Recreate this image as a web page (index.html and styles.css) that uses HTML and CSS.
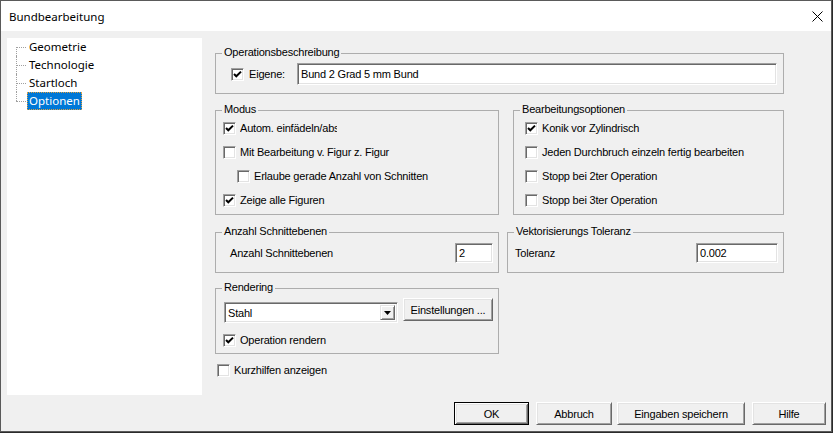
FILE: index.html
```html
<!DOCTYPE html>
<html lang="de">
<head>
<meta charset="utf-8">
<title>Bundbearbeitung</title>
<link rel="stylesheet" href="styles.css">
</head>
<body>
<div class="window">
  <div class="titlebar">
    <span class="title">Bundbearbeitung</span>
    <span class="close">
      <svg width="11" height="11" viewBox="0 0 11 11"><path d="M0.5 0.5 L10.5 10.5 M10.5 0.5 L0.5 10.5" stroke="#000" stroke-width="1" fill="none"/></svg>
    </span>
  </div>
  <div class="client">
    <div class="main">
      <div class="tree">
        <div class="node first"><span class="label">Geometrie</span></div>
        <div class="node"><span class="label">Technologie</span></div>
        <div class="node"><span class="label">Startloch</span></div>
        <div class="node last"><span class="label selected">Optionen</span></div>
      </div>
      <div class="panel">
        <div class="group g-desc">
          <span class="legend">Operationsbeschreibung</span>
          <span class="cb checked"><svg width="11" height="11" viewBox="0 0 11 11"><path d="M2 5 L4.3 7.3 L9 2.6" stroke="#000" stroke-width="2" fill="none"/></svg></span>
          <span class="cb-text eig">Eigene:</span>
          <span class="edit e-desc">Bund 2 Grad 5 mm Bund</span>
        </div>

        <div class="row r2">
          <div class="group g-modus">
            <span class="legend">Modus</span>
            <div class="opt"><span class="cb checked"><svg width="11" height="11" viewBox="0 0 11 11"><path d="M2 5 L4.3 7.3 L9 2.6" stroke="#000" stroke-width="2" fill="none"/></svg></span><span class="cb-text clip">Autom. einfädeln/absetzen</span></div>
            <div class="opt"><span class="cb"></span><span class="cb-text">Mit Bearbeitung v. Figur z. Figur</span></div>
            <div class="opt indent"><span class="cb"></span><span class="cb-text">Erlaube gerade Anzahl von Schnitten</span></div>
            <div class="opt"><span class="cb checked"><svg width="11" height="11" viewBox="0 0 11 11"><path d="M2 5 L4.3 7.3 L9 2.6" stroke="#000" stroke-width="2" fill="none"/></svg></span><span class="cb-text">Zeige alle Figuren</span></div>
          </div>
          <div class="group g-bearb">
            <span class="legend">Bearbeitungsoptionen</span>
            <div class="opt"><span class="cb checked"><svg width="11" height="11" viewBox="0 0 11 11"><path d="M2 5 L4.3 7.3 L9 2.6" stroke="#000" stroke-width="2" fill="none"/></svg></span><span class="cb-text">Konik vor Zylindrisch</span></div>
            <div class="opt"><span class="cb"></span><span class="cb-text">Jeden Durchbruch einzeln fertig bearbeiten</span></div>
            <div class="opt"><span class="cb"></span><span class="cb-text">Stopp bei 2ter Operation</span></div>
            <div class="opt"><span class="cb"></span><span class="cb-text">Stopp bei 3ter Operation</span></div>
          </div>
        </div>

        <div class="row r3">
          <div class="group g-anz">
            <span class="legend">Anzahl Schnittebenen</span>
            <span class="field-label">Anzahl Schnittebenen</span>
            <span class="edit e-anz">2</span>
          </div>
          <div class="group g-vek">
            <span class="legend">Vektorisierungs Toleranz</span>
            <span class="field-label">Toleranz</span>
            <span class="edit e-tol">0.002</span>
          </div>
        </div>

        <div class="group g-render">
          <span class="legend">Rendering</span>
          <div class="render-row">
            <div class="combo">
              <span class="combo-text">Stahl</span>
              <span class="combo-btn"><svg width="7" height="4" viewBox="0 0 7 4"><path d="M0 0 H7 L3.5 4 Z" fill="#000"/></svg></span>
            </div>
            <span class="btn b-einst">Einstellungen ...</span>
          </div>
          <div class="opt"><span class="cb checked"><svg width="11" height="11" viewBox="0 0 11 11"><path d="M2 5 L4.3 7.3 L9 2.6" stroke="#000" stroke-width="2" fill="none"/></svg></span><span class="cb-text">Operation rendern</span></div>
        </div>

        <div class="opt kurz"><span class="cb"></span><span class="cb-text">Kurzhilfen anzeigen</span></div>
      </div>
    </div>
    <div class="buttons">
      <span class="btn default b-ok">OK</span>
      <span class="btn b-abb">Abbruch</span>
      <span class="btn b-save">Eingaben speichern</span>
      <span class="btn b-hilfe">Hilfe</span>
    </div>
  </div>
</div>
</body>
</html>
```

FILE: styles.css
```css
html, body {
  margin: 0;
  padding: 0;
}
body {
  width: 833px;
  height: 433px;
  overflow: hidden;
  background: #2b2b2b;
  font-family: "Liberation Sans", Arial, sans-serif;
  font-size: 11px;
  color: #000;
}
.window {
  width: 832px;
  height: 432px;
  box-sizing: border-box;
  border: 1px solid #5a5a5a;
  background: #f0f0f0;
  display: flex;
  flex-direction: column;
}
.titlebar {
  height: 30px;
  flex: none;
  background: #fff;
  display: flex;
  align-items: center;
  padding-left: 8px;
  padding-right: 8px;
}
.title {
  font-family: "Noto Sans", "Open Sans", sans-serif;
  font-size: 11.5px;
  flex: 1;
}
.close {
  width: 11px;
  height: 11px;
  display: flex;
}
.client {
  flex: 1;
  display: flex;
  flex-direction: column;
  padding: 7px 5px 6px 6px;
}
.main {
  display: flex;
  height: 357px;
}

/* tree */
.tree {
  width: 195px;
  background: #fff;
  font-family: "Noto Sans", "Open Sans", sans-serif;
  font-size: 11.5px;
}
.node {
  position: relative;
  height: 18px;
  display: flex;
  align-items: center;
  padding-left: 20px;
}
.node::before {
  content: "";
  position: absolute;
  left: 9px;
  top: 9px;
  width: 10px;
  border-top: 1px dotted #a0a0a0;
}
.node::after {
  content: "";
  position: absolute;
  left: 9px;
  top: 0;
  height: 18px;
  border-left: 1px dotted #a0a0a0;
}
.node.first::after {
  top: 9px;
  height: 9px;
}
.node.last::after {
  height: 9px;
}
.label {
  padding: 0 1px 0 1px;
  line-height: 16px;
  border: 1px solid transparent;
}
.label.selected {
  background: #0078d7;
  color: #fff;
  border: 1px dotted #e0a040;
}

/* panel */
.panel {
  margin-left: 13px;
  padding-top: 15px;
  width: 569px;
  display: flex;
  flex-direction: column;
}
.group {
  position: relative;
  box-sizing: border-box;
  border: 1px solid #adadad;
}
.legend {
  position: absolute;
  top: -8px;
  left: 6px;
  padding: 0 2px;
  line-height: 13px;
  background: #f0f0f0;
  white-space: nowrap;
  letter-spacing: -0.2px;
}
.row {
  display: flex;
}
.cb {
  width: 13px;
  height: 13px;
  box-sizing: border-box;
  flex: none;
  background: #fff;
  border: 1px solid;
  border-color: #a0a0a0 #fff #fff #a0a0a0;
  box-shadow: inset 1px 1px 0 #696969, inset -1px -1px 0 #e3e3e3;
  display: flex;
  align-items: center;
  justify-content: center;
}
.cb svg {
  display: block;
}
.cb-text {
  margin-left: 4px;
  white-space: nowrap;
  letter-spacing: -0.2px;
}
.edit {
  box-sizing: border-box;
  background: #fff;
  border: 1px solid;
  border-color: #a0a0a0 #fff #fff #a0a0a0;
  box-shadow: inset 1px 1px 0 #696969, inset -1px -1px 0 #e3e3e3;
  display: flex;
  align-items: center;
  padding-left: 3px;
  white-space: nowrap;
  letter-spacing: -0.2px;
}

.g-desc {
  height: 41px;
  display: flex;
  align-items: center;
  padding-left: 15px;
  padding-top: 1px;
}
.eig {
  margin-left: 5px;
  width: 48px;
}
.e-desc {
  width: 480px;
  height: 22px;
}

.r2 {
  margin-top: 16px;
}
.g-modus {
  width: 284px;
  height: 105px;
  padding: 5px 7px 2px 7px;
}
.g-bearb {
  width: 271px;
  height: 105px;
  margin-left: 14px;
  padding: 5px 11px 2px 11px;
}
.opt {
  height: 24px;
  display: flex;
  align-items: center;
}
.opt.indent {
  padding-left: 14px;
}
.clip {
  width: 97px;
  overflow: hidden;
}

.r3 {
  margin-top: 17px;
}
.g-anz, .g-vek {
  height: 41px;
  display: flex;
  align-items: center;
  justify-content: space-between;
  padding-top: 1px;
}
.g-anz {
  width: 284px;
  padding-left: 14px;
  padding-right: 5px;
}
.g-vek {
  width: 277px;
  margin-left: 8px;
  padding-left: 7px;
  padding-right: 5px;
}
.field-label {
  letter-spacing: -0.2px;
}
.e-anz {
  width: 38px;
  height: 20px;
}
.e-tol {
  width: 82px;
  height: 20px;
}

.g-render {
  margin-top: 15px;
  width: 284px;
  height: 66px;
  padding: 9px 5px 4px 7px;
}
.render-row {
  display: flex;
  align-items: flex-start;
  height: 23px;
  margin-bottom: 10px;
}
.combo {
  margin-top: 4px;
  margin-left: 1px;
  width: 174px;
  height: 21px;
  box-sizing: border-box;
  background: #fff;
  border: 1px solid;
  border-color: #a0a0a0 #fff #fff #a0a0a0;
  box-shadow: inset 1px 1px 0 #696969, inset -1px -1px 0 #e3e3e3;
  display: flex;
  align-items: center;
  padding: 2px;
}
.combo-text {
  flex: 1;
  padding-left: 1px;
  letter-spacing: -0.2px;
}
.combo-btn {
  width: 15px;
  height: 15px;
  box-sizing: border-box;
  background: #f0f0f0;
  border: 1px solid;
  border-color: #e3e3e3 #696969 #696969 #e3e3e3;
  box-shadow: inset 1px 1px 0 #fff, inset -1px -1px 0 #a0a0a0;
  display: flex;
  align-items: center;
  justify-content: center;
}
.g-render .opt {
  height: 18px;
}
.kurz {
  margin-top: 7px;
  height: 18px;
  padding-left: 2px;
}

/* buttons */
.btn {
  box-sizing: border-box;
  height: 23px;
  display: flex;
  align-items: center;
  justify-content: center;
  background: #f0f0f0;
  border: 1px solid;
  border-color: #fff #696969 #696969 #fff;
  box-shadow: inset 1px 1px 0 #e3e3e3, inset -1px -1px 0 #a0a0a0;
  white-space: nowrap;
  letter-spacing: -0.2px;
}
.btn.default {
  border: 1px solid #000;
  box-shadow: inset 1px 1px 0 #fff, inset -1px -1px 0 #696969, inset 2px 2px 0 #e3e3e3, inset -2px -2px 0 #a0a0a0;
}
.b-einst {
  width: 90px;
  margin-left: 5px;
}
.buttons {
  margin-top: 7px;
  display: flex;
  justify-content: flex-end;
}
.b-ok { width: 75px; }
.b-abb { width: 76px; margin-left: 7px; }
.b-save { width: 128px; margin-left: 5px; }
.b-hilfe { width: 74px; margin-left: 7px; }
```
